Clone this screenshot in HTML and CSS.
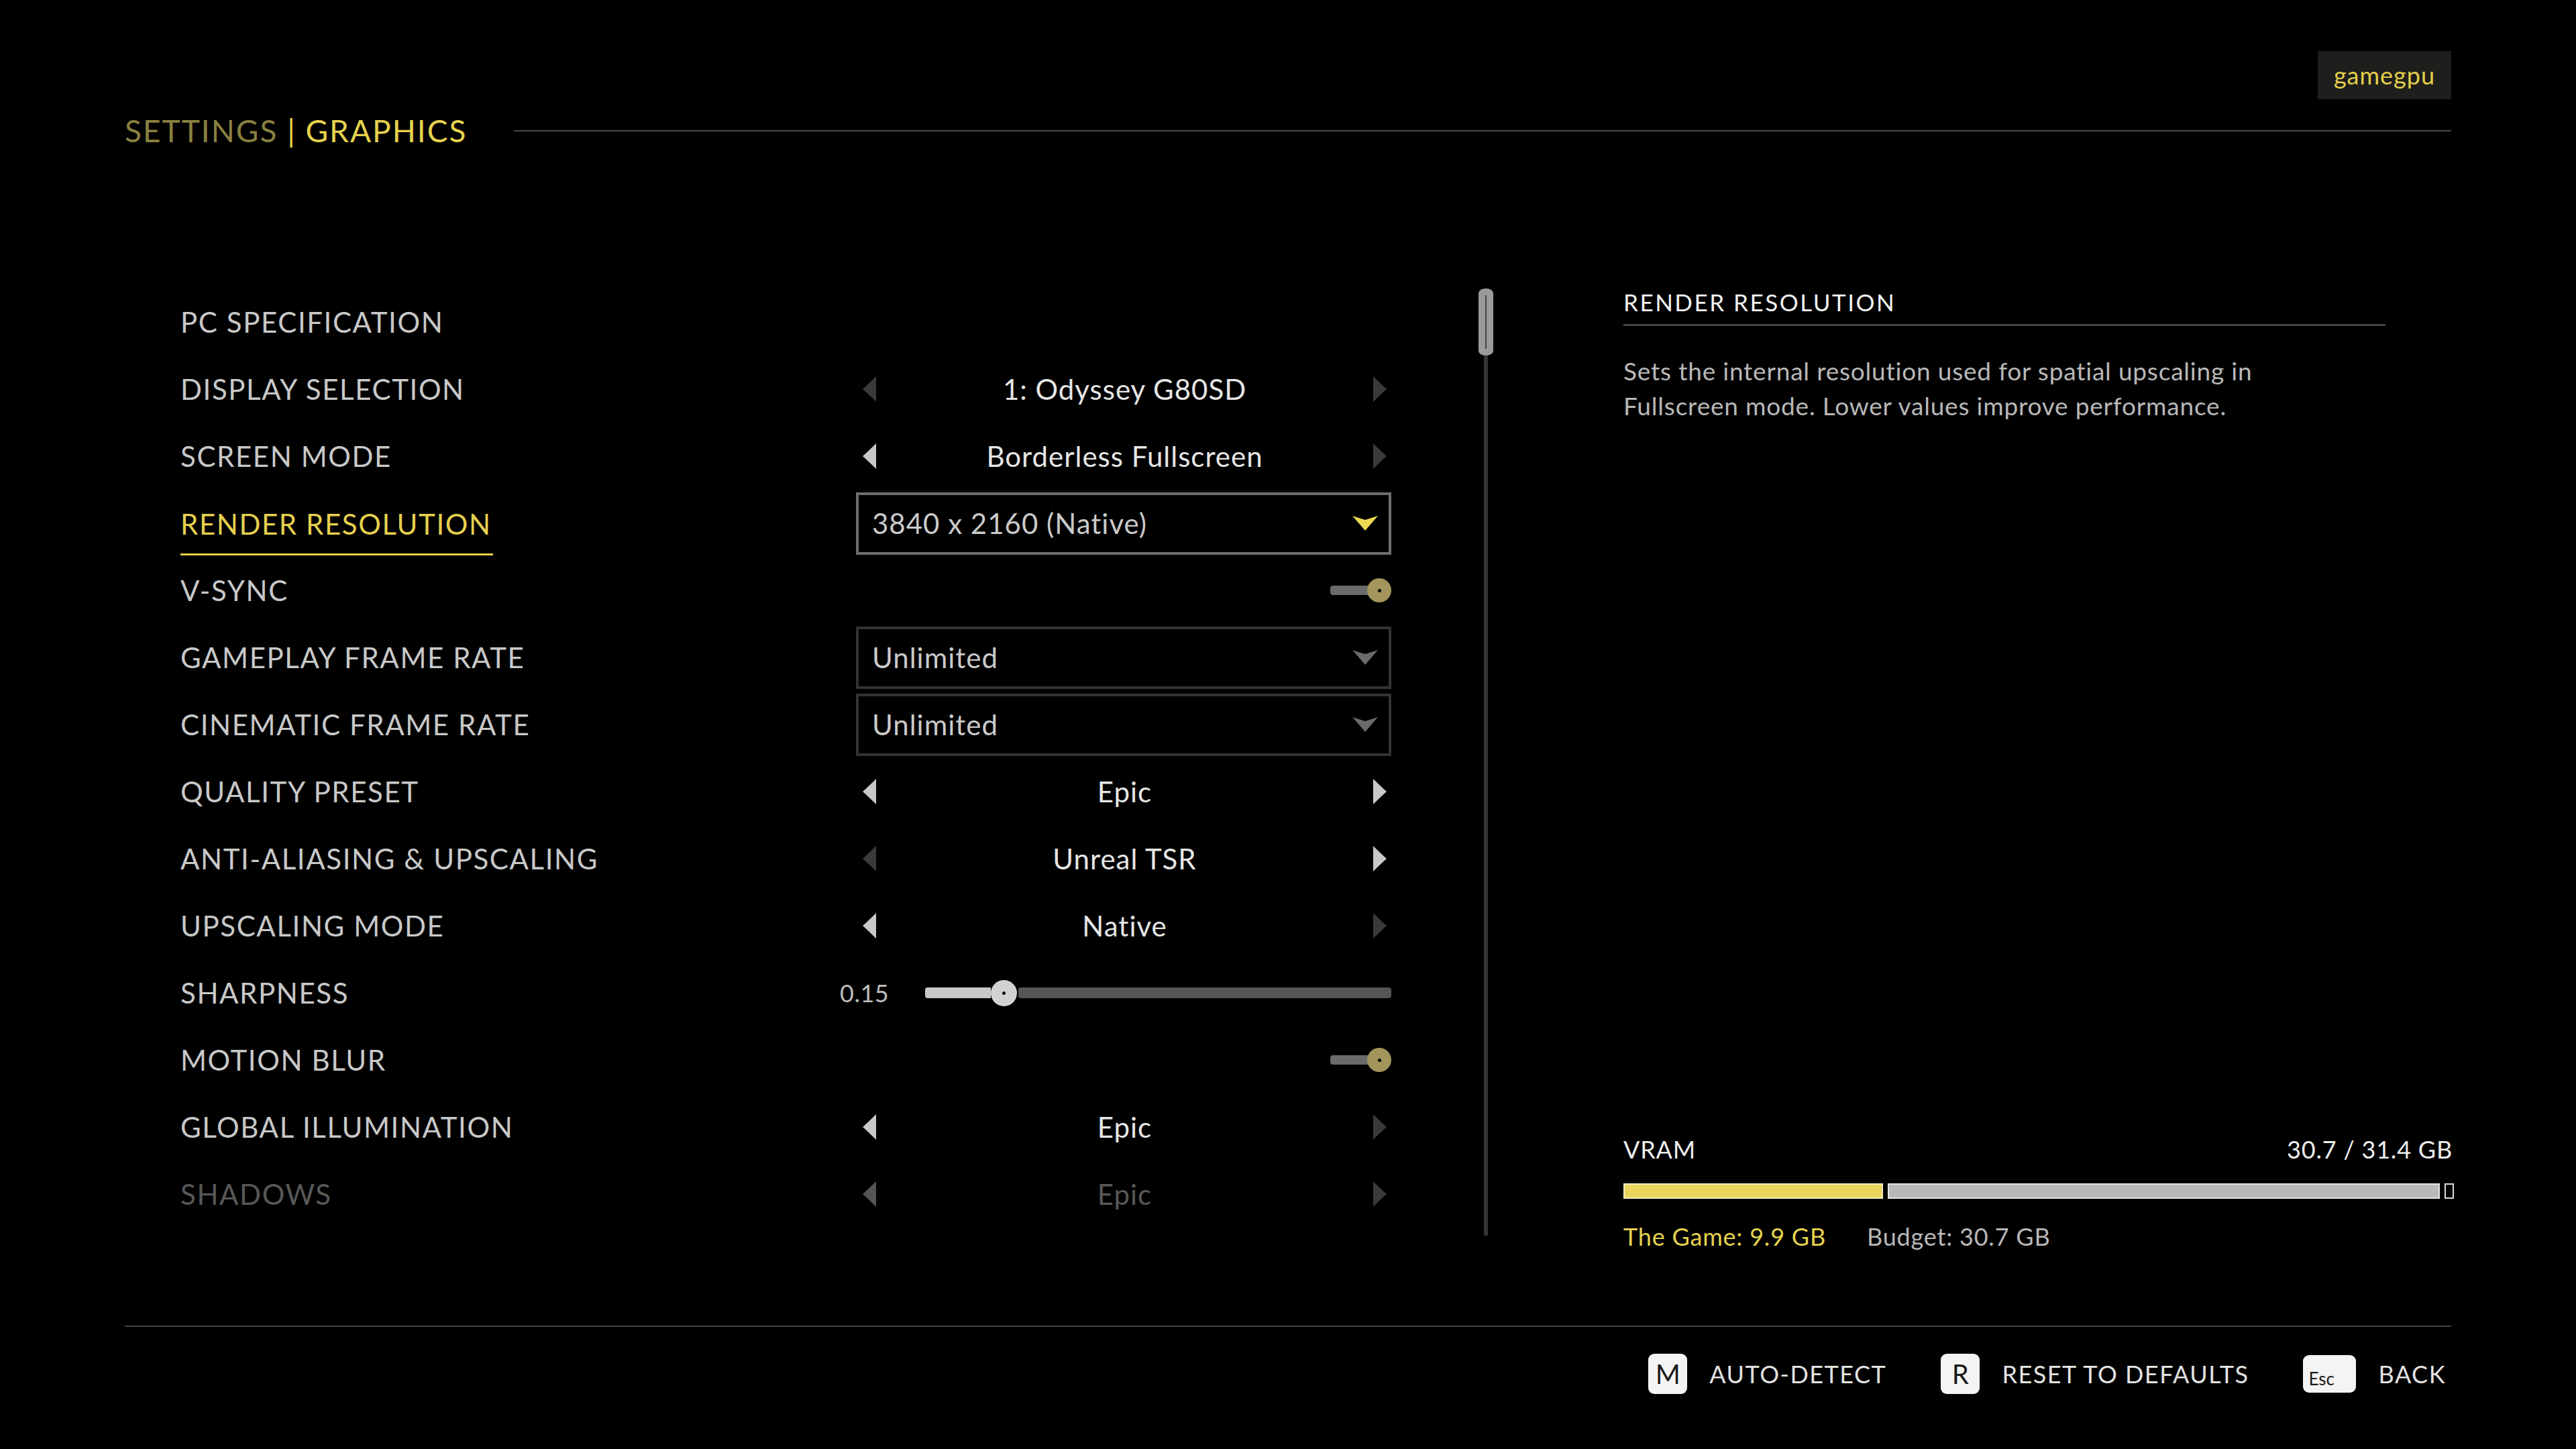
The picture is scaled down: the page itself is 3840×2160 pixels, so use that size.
FILE: index.html
```html
<!DOCTYPE html>
<html>
<head>
    <title>Settings | Graphics</title>
    <link rel="stylesheet" href="styles.css">
</head>
<body>
<div class="page">
    <div class="topbar">
        <div class="badge">gamegpu</div>
    </div>

    <div class="title-row">
        <div class="title"><span class="section">SETTINGS</span> <span class="current">| GRAPHICS</span></div>
        <div class="title-line"></div>
    </div>

    <div class="main">
        <div class="settings">
            <div class="row">
                <div class="label">PC SPECIFICATION</div>
                <div class="control"></div>
            </div>
            <div class="row">
                <div class="label">DISPLAY SELECTION</div>
                <div class="control selector">
                    <svg class="arrow" viewBox="0 0 20 38"><path d="M20 0 L20 38 Q9 27 0 19 Q9 11 20 0Z"/></svg>
                    <span class="value">1: Odyssey G80SD</span>
                    <svg class="arrow" viewBox="0 0 20 38"><path d="M0 0 L0 38 Q11 27 20 19 Q11 11 0 0Z"/></svg>
                </div>
            </div>
            <div class="row">
                <div class="label">SCREEN MODE</div>
                <div class="control selector">
                    <svg class="arrow on" viewBox="0 0 20 38"><path d="M20 0 L20 38 Q9 27 0 19 Q9 11 20 0Z"/></svg>
                    <span class="value">Borderless Fullscreen</span>
                    <svg class="arrow" viewBox="0 0 20 38"><path d="M0 0 L0 38 Q11 27 20 19 Q11 11 0 0Z"/></svg>
                </div>
            </div>
            <div class="row">
                <div class="label"><span class="active-label">RENDER RESOLUTION</span></div>
                <div class="control dropdown active">
                    <span>3840 x 2160 (Native)</span>
                    <svg class="caret" viewBox="0 0 38 22"><path d="M0 0 L19 6 L38 0 L19 22Z"/></svg>
                </div>
            </div>
            <div class="row">
                <div class="label">V-SYNC</div>
                <div class="control toggle-cell">
                    <div class="toggle"><div class="toggle-track"></div><div class="toggle-knob"></div></div>
                </div>
            </div>
            <div class="row">
                <div class="label">GAMEPLAY FRAME RATE</div>
                <div class="control dropdown">
                    <span>Unlimited</span>
                    <svg class="caret" viewBox="0 0 38 22"><path d="M0 0 L19 6 L38 0 L19 22Z"/></svg>
                </div>
            </div>
            <div class="row">
                <div class="label">CINEMATIC FRAME RATE</div>
                <div class="control dropdown">
                    <span>Unlimited</span>
                    <svg class="caret" viewBox="0 0 38 22"><path d="M0 0 L19 6 L38 0 L19 22Z"/></svg>
                </div>
            </div>
            <div class="row">
                <div class="label">QUALITY PRESET</div>
                <div class="control selector">
                    <svg class="arrow on" viewBox="0 0 20 38"><path d="M20 0 L20 38 Q9 27 0 19 Q9 11 20 0Z"/></svg>
                    <span class="value">Epic</span>
                    <svg class="arrow on" viewBox="0 0 20 38"><path d="M0 0 L0 38 Q11 27 20 19 Q11 11 0 0Z"/></svg>
                </div>
            </div>
            <div class="row">
                <div class="label">ANTI-ALIASING &amp; UPSCALING</div>
                <div class="control selector">
                    <svg class="arrow" viewBox="0 0 20 38"><path d="M20 0 L20 38 Q9 27 0 19 Q9 11 20 0Z"/></svg>
                    <span class="value">Unreal TSR</span>
                    <svg class="arrow on" viewBox="0 0 20 38"><path d="M0 0 L0 38 Q11 27 20 19 Q11 11 0 0Z"/></svg>
                </div>
            </div>
            <div class="row">
                <div class="label">UPSCALING MODE</div>
                <div class="control selector">
                    <svg class="arrow on" viewBox="0 0 20 38"><path d="M20 0 L20 38 Q9 27 0 19 Q9 11 20 0Z"/></svg>
                    <span class="value">Native</span>
                    <svg class="arrow" viewBox="0 0 20 38"><path d="M0 0 L0 38 Q11 27 20 19 Q11 11 0 0Z"/></svg>
                </div>
            </div>
            <div class="row">
                <div class="label">SHARPNESS</div>
                <div class="control slider">
                    <span class="slider-value">0.15</span>
                    <div class="slider-track">
                        <div class="slider-fill" style="width: 98px"></div>
                        <div class="slider-knob"></div>
                        <div class="slider-rest"></div>
                    </div>
                </div>
            </div>
            <div class="row">
                <div class="label">MOTION BLUR</div>
                <div class="control toggle-cell">
                    <div class="toggle"><div class="toggle-track"></div><div class="toggle-knob"></div></div>
                </div>
            </div>
            <div class="row">
                <div class="label">GLOBAL ILLUMINATION</div>
                <div class="control selector">
                    <svg class="arrow on" viewBox="0 0 20 38"><path d="M20 0 L20 38 Q9 27 0 19 Q9 11 20 0Z"/></svg>
                    <span class="value">Epic</span>
                    <svg class="arrow" viewBox="0 0 20 38"><path d="M0 0 L0 38 Q11 27 20 19 Q11 11 0 0Z"/></svg>
                </div>
            </div>
            <div class="row dim">
                <div class="label">SHADOWS</div>
                <div class="control selector">
                    <svg class="arrow half" viewBox="0 0 20 38"><path d="M20 0 L20 38 Q9 27 0 19 Q9 11 20 0Z"/></svg>
                    <span class="value">Epic</span>
                    <svg class="arrow" viewBox="0 0 20 38"><path d="M0 0 L0 38 Q11 27 20 19 Q11 11 0 0Z"/></svg>
                </div>
            </div>
        </div>

        <div class="scrollbar">
            <div class="thumb"></div>
            <div class="track"></div>
        </div>

        <div class="info">
            <div class="info-title">RENDER RESOLUTION</div>
            <p class="info-text">Sets the internal resolution used for spatial upscaling in<br>Fullscreen mode. Lower values improve performance.</p>

            <div class="vram">
                <div class="vram-head">
                    <span class="vram-name">VRAM</span>
                    <span>30.7 / 31.4 GB</span>
                </div>
                <div class="vram-bar">
                    <div class="bar-game" style="width: 387px"></div>
                    <div class="bar-used"></div>
                    <div class="bar-free"></div>
                </div>
                <div class="vram-legend">
                    <span class="legend-game">The Game: 9.9 GB</span>
                    <span class="legend-budget">Budget: 30.7 GB</span>
                </div>
            </div>
        </div>
    </div>

    <div class="footer">
        <div class="hint"><span class="key">M</span><span class="hint-label">AUTO-DETECT</span></div>
        <div class="hint"><span class="key">R</span><span class="hint-label">RESET TO DEFAULTS</span></div>
        <div class="hint"><span class="key esc">Esc</span><span class="hint-label">BACK</span></div>
    </div>
</div>
</body>
</html>
```

FILE: styles.css
```css
body {
    margin: 0;
    background: #000;
    color: #cfcfcf;
    font-family: Lato, "Open Sans", sans-serif;
}
.page {
    width: 3840px;
    height: 2160px;
    box-sizing: border-box;
    padding: 76px 186px 0;
    overflow: hidden;
}
.topbar {
    display: flex;
    justify-content: flex-end;
}
.badge {
    width: 199px;
    height: 72px;
    background: #1e1e1c;
    color: #e4cf4b;
    font-size: 36px;
    letter-spacing: 1px;
    display: flex;
    align-items: center;
    justify-content: center;
}
.title-row {
    display: flex;
    align-items: center;
    height: 56px;
    margin-top: 19px;
}
.title {
    font-size: 46px;
    line-height: 56px;
    letter-spacing: 2px;
    white-space: nowrap;
}
.title .section {
    color: #8a8140;
}
.title .current {
    color: #e6d24e;
}
.title-line {
    flex: 1;
    height: 2px;
    background: #4a4a4a;
    margin-left: 70px;
}
.main {
    display: flex;
    height: 1412px;
    margin-top: 207px;
}
.settings {
    margin-left: 83px;
    width: 1805px;
}
.row {
    display: grid;
    grid-template-columns: 1007px 798px;
    height: 100px;
    align-items: center;
}
.label {
    font-size: 42px;
    letter-spacing: 1.6px;
    color: #c8c8c8;
    white-space: nowrap;
}
.active-label {
    display: inline-block;
    color: #e6d04f;
    line-height: 44px;
    margin-top: 26px;
    padding: 0 2px 22px 0;
    border-bottom: 3px solid #e6d04f;
}
.row.dim .label,
.row.dim .value {
    color: #585858;
}
.control {
    height: 93px;
    box-sizing: border-box;
}
.selector {
    display: flex;
    align-items: center;
    justify-content: space-between;
    padding: 0 7px 0 10px;
}
.value {
    font-size: 42px;
    letter-spacing: 1px;
    color: #e6e6e6;
}
.arrow {
    width: 20px;
    height: 38px;
    fill: #3a3a3a;
}
.arrow.on {
    fill: #c8c8c8;
}
.arrow.half {
    fill: #555;
}
.dropdown {
    display: flex;
    align-items: center;
    justify-content: space-between;
    border: 4px solid #333;
    padding: 0 16px 0 20px;
    font-size: 42px;
    letter-spacing: 1px;
    color: #cacaca;
}
.dropdown.active {
    border-color: #6e6e6e;
}
.caret {
    width: 38px;
    height: 22px;
    fill: #6a6a6a;
}
.dropdown.active .caret {
    fill: #ecd752;
}
.toggle-cell {
    display: flex;
    align-items: center;
    justify-content: flex-end;
}
.toggle {
    display: flex;
    align-items: center;
}
.toggle-track {
    width: 60px;
    height: 14px;
    background: #6b6b6b;
    border-radius: 4px 0 0 4px;
}
.toggle-knob {
    width: 36px;
    height: 36px;
    margin-left: -5px;
    border-radius: 50%;
    background: #a3955b;
    display: flex;
    align-items: center;
    justify-content: center;
}
.toggle-knob::after,
.slider-knob::after {
    content: "";
    width: 5px;
    height: 5px;
    border-radius: 50%;
    background: #000;
}
.slider {
    display: flex;
    align-items: center;
    margin-left: -24px;
}
.slider-value {
    width: 71px;
    font-size: 36px;
    letter-spacing: 0.5px;
    color: #bdbdbd;
}
.slider-track {
    flex: 1;
    display: flex;
    align-items: center;
    margin-left: 56px;
}
.slider-fill {
    height: 16px;
    background: #c8c8c8;
    border-radius: 4px 0 0 4px;
}
.slider-knob {
    width: 39px;
    height: 39px;
    border-radius: 50%;
    background: #d2d2d2;
    margin-right: 2px;
    display: flex;
    align-items: center;
    justify-content: center;
}
.slider-rest {
    flex: 1;
    height: 16px;
    background: #555;
    border-radius: 4px;
}
.scrollbar {
    margin-left: 130px;
    width: 22px;
    display: flex;
    flex-direction: column;
    align-items: center;
}
.thumb {
    position: relative;
    width: 22px;
    height: 100px;
    background: #9a9a9a;
    border-radius: 11px / 7px;
}
.thumb::after {
    content: "";
    position: absolute;
    left: 10px;
    top: 10px;
    bottom: 10px;
    width: 2px;
    background: #444;
}
.track {
    flex: 1;
    width: 6px;
    background: #333;
}
.info {
    margin-left: 194px;
    flex: 1;
}
.info-title {
    width: 1136px;
    font-size: 35px;
    line-height: 40px;
    letter-spacing: 2.5px;
    color: #f2f2f2;
    padding-bottom: 13px;
    border-bottom: 3px solid #444;
}
.info-text {
    margin: 41px 0 0;
    font-size: 37px;
    line-height: 52px;
    letter-spacing: 0.8px;
    color: #b8b8b8;
    white-space: nowrap;
}
.vram {
    margin-top: 1060px;
    font-size: 36px;
    line-height: 44px;
    letter-spacing: 0.8px;
}
.vram-head {
    display: flex;
    justify-content: space-between;
    color: #eeeeee;
    margin-right: -2px;
}
.vram-bar {
    display: flex;
    gap: 7px;
    height: 23px;
    margin-top: 29px;
    margin-right: -4px;
}
.vram-bar div {
    box-sizing: border-box;
}
.bar-game {
    background: #e9d55b;
    border: 2px solid #f3ecc4;
}
.bar-used {
    flex: 1;
    background: #b9b9b9;
    border: 2px solid #e4e4e4;
}
.bar-free {
    width: 14px;
    border: 2px solid #dcdcdc;
}
.vram-legend {
    display: flex;
    gap: 61px;
    margin-top: 34px;
}
.legend-game {
    color: #e6d24e;
}
.legend-budget {
    color: #b8b8b8;
}
.footer {
    margin-top: 134px;
    border-top: 2px solid #444;
    padding: 40px 8px 0 0;
    display: flex;
    justify-content: flex-end;
    align-items: center;
}
.hint {
    display: flex;
    align-items: center;
    margin-left: 81px;
}
.key {
    width: 58px;
    height: 60px;
    box-sizing: border-box;
    background: #f4f4f4;
    border-radius: 9px;
    color: #1a1a1a;
    font-size: 40px;
    display: flex;
    align-items: center;
    justify-content: center;
}
.key.esc {
    width: 79px;
    height: 56px;
    font-size: 26px;
    align-items: flex-end;
    justify-content: flex-start;
    padding: 0 0 5px 8px;
}
.hint-label {
    margin-left: 33px;
    font-size: 36px;
    letter-spacing: 1.5px;
    color: #e2e2e2;
}
```
